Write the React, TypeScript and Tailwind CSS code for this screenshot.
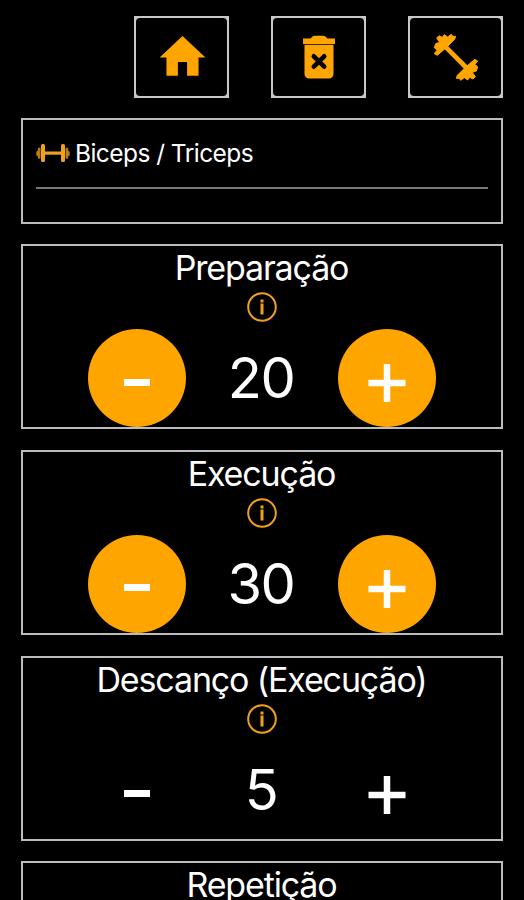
import React from "react";

type IconProps = { className?: string };

function HomeIcon({ className }: IconProps) {
  return (
    <svg viewBox="0 0 24 24" fill="currentColor" className={className}>
      <path d="M10 20v-6h4v6h5v-8h3L12 2.6 2 12h3v8z" />
    </svg>
  );
}

function TrashIcon({ className }: IconProps) {
  return (
    <svg viewBox="0 0 34 44" className={className}>
      <path
        fill="currentColor"
        d="M1 3.500h7.500Q10.500 .8 12.500 .8h9Q23.500 .8 25.500 3.500H33v5.500H1zM2.500 9.800h29v29.200a4.500 4.500 0 0 1-4.500 4.500H7A4.500 4.500 0 0 1 2.500 39z"
      />
      <path
        d="M11.800 21.300l10.400 10.400M22.200 21.300L11.800 31.700"
        stroke="#000"
        strokeWidth="4.600"
        strokeLinecap="round"
      />
    </svg>
  );
}

const PLATE =
  "M20 76L11 71L19 61L11 53L15 41L27 37L18 24L25 17L35 22L41 14L51 21L62 13L66 19L75 19L72 28L50 50Z";

function DumbbellIcon({ className }: IconProps) {
  return (
    <svg
      viewBox="-5 0 162 162"
      fill="currentColor"
      stroke="currentColor"
      strokeLinejoin="round"
      className={className}
    >
      <path d={PLATE} strokeWidth="3" />
      <path d={PLATE} strokeWidth="3" transform="rotate(180 76 82)" />
      <path d="M44 50L108 114" strokeWidth="14" />
    </svg>
  );
}

function BarbellIcon({ className }: IconProps) {
  return (
    <svg viewBox="0 0 34 20" fill="currentColor" className={className}>
      <rect x="0.300" y="8" width="2" height="5" rx="1" opacity="0.75" />
      <rect x="1.800" y="4.800" width="2.700" height="11" rx="1" opacity="0.75" />
      <rect x="5" y="1" width="4" height="18" rx="1.500" />
      <rect x="9" y="8.500" width="16" height="3.200" />
      <rect x="25" y="1" width="4" height="18" rx="1.500" />
      <rect x="29.500" y="4.800" width="2.700" height="11" rx="1" opacity="0.75" />
      <rect x="31.700" y="8" width="2" height="5" rx="1" opacity="0.75" />
    </svg>
  );
}

function InfoIcon({ className }: IconProps) {
  return (
    <svg viewBox="0 0 30 30" fill="none" stroke="currentColor" className={className}>
      <circle cx="15" cy="15" r="13.800" strokeWidth="2" />
      <path d="M15 7.500v3M15 11.500v11" strokeWidth="3" />
    </svg>
  );
}

function ToolbarButton({ label, children }: { label: string; children: React.ReactNode }) {
  return (
    <button aria-label={label} className="h-[82px] w-[95px] bg-[#c8c8c8] p-[2px]">
      <span className="flex h-full w-full items-center justify-center rounded-[4px] bg-black text-[#ffa500]">
        {children}
      </span>
    </button>
  );
}

type Timer = { title: string; value?: number; filled?: boolean };

const timers: Timer[] = [
  { title: "Preparação", value: 20, filled: true },
  { title: "Execução", value: 30, filled: true },
  { title: "Descanço (Execução)", value: 5 },
  { title: "Repetição" },
];

function StepButton({ label, filled, children }: { label: string; filled?: boolean; children: React.ReactNode }) {
  return (
    <button
      aria-label={label}
      className={`flex size-[98px] items-center justify-center rounded-full ${filled ? "bg-[#ffa500]" : "bg-black"}`}
    >
      {children}
    </button>
  );
}

function TimerCard({ title, value, filled }: Timer) {
  return (
    <section className="flex h-[185px] shrink-0 flex-col items-center border-2 border-[#bcbcbe]">
      <h2 className="h-[46px] pr-px text-[34px] leading-[44px] tracking-[-1.15px] whitespace-nowrap">{title}</h2>
      <InfoIcon className="size-[30px] shrink-0 text-[#f0a020]" />
      {value !== undefined ? (
        <div className="mt-[7px] flex items-center">
          <StepButton label="Diminuir" filled={filled}>
            <span className="mt-[8px] h-[7px] w-[26px] bg-white" />
          </StepButton>
          <span className="w-[152px] pr-[2px] text-center text-[56px] leading-[98px] tracking-[-1.5px]">{value}</span>
          <StepButton label="Aumentar" filled={filled}>
            <svg viewBox="0 0 38 40" className="mt-[10px] h-10 w-[38px]" stroke="#fff" strokeWidth="6.500">
              <path d="M19 1v38M0.500 20h37" />
            </svg>
          </StepButton>
        </div>
      ) : null}
    </section>
  );
}

export default function App() {
  return (
    <main className="flex h-screen flex-col overflow-hidden bg-black pr-[21px] pl-[21px] font-['Inter',sans-serif] text-white">
      <header className="flex shrink-0 justify-end gap-[42px] pt-4">
        <ToolbarButton label="Início">
          <HomeIcon className="ml-px size-[55px]" />
        </ToolbarButton>
        <ToolbarButton label="Excluir">
          <TrashIcon className="h-11 w-[34px]" />
        </ToolbarButton>
        <ToolbarButton label="Treinos">
          <DumbbellIcon className="size-[54px]" />
        </ToolbarButton>
      </header>

      <section className="mt-5 h-[106px] shrink-0 border-2 border-[#bcbcbe] pr-[13px] pl-[13px]">
        <div className="flex h-[69px] items-center gap-[5px] border-b-2 border-[#77777c]">
          <BarbellIcon className="-mt-[2px] h-5 w-[34px] text-[#f0a020]" />
          <span className="text-[24.5px] tracking-[-0.55px]">Biceps / Triceps</span>
        </div>
      </section>

      <div className="mt-5 flex flex-col gap-[20.8px]">
        {timers.map((timer) => (
          <TimerCard key={timer.title} {...timer} />
        ))}
      </div>
    </main>
  );
}
